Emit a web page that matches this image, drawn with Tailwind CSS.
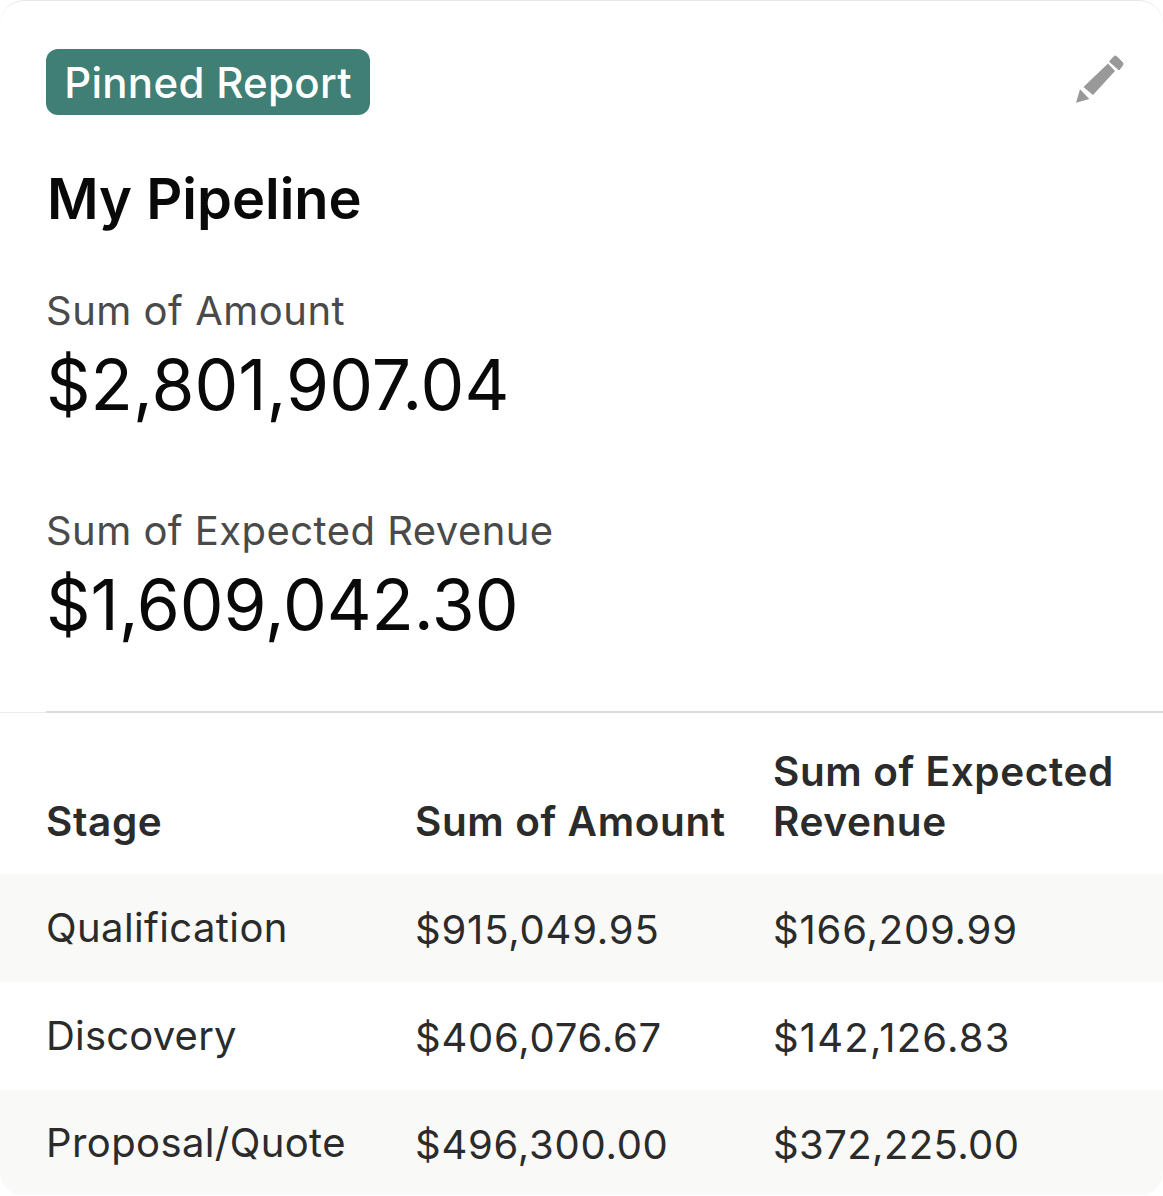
<!DOCTYPE html>
<html lang="en">
<head>
    <meta charset="UTF-8">
    <meta name="viewport" content="width=device-width, initial-scale=1.0">
    <title>My Pipeline</title>
    <script src="https://cdn.jsdelivr.net/npm/@tailwindcss/browser@4"></script>
</head>
<body class="bg-white font-['Inter',sans-serif]">
    <div class="w-[1163px] h-[1196px] overflow-hidden bg-white border-t border-[#e8e8e8] rounded-[24px]">
        <div class="pl-[46px] pr-[38px] pt-[48px]">
            <div class="flex justify-between items-start">
                <span class="h-[66px] w-[324px] flex items-center justify-center rounded-[12px] bg-[#407f75] text-white text-[42px] tracking-[0.3px] font-medium">Pinned Report</span>
                <svg class="mt-[5px]" width="50" height="50" viewBox="0 0 50 50" fill="#999999">
                    <path d="M8.5 33 L33 9.5 L40 17 L18 41 Z"/>
                    <path d="M34.5 7.5 L39 2.5 Q40 1.5 41.5 2.5 L47.5 8.5 Q48.5 10 47.5 11.5 L44 16 Z" stroke="#999999" stroke-linejoin="round"/>
                    <path d="M5 35.3 L14.3 45 L1 48.7 Z"/>
                </svg>
            </div>
            <h1 class="mt-[49px] pl-[1px] text-[56px] leading-[70px] font-semibold text-[#090909]">My Pipeline</h1>
            <div class="mt-[52px]">
                <p class="text-[40px] leading-[50px] tracking-[0.5px] text-[#4a4a4a]">Sum of Amount</p>
                <p class="mt-[13px] text-[69.5px] leading-[72px] text-[#090909]">$2,801,907.04</p>
            </div>
            <div class="mt-[85px]">
                <p class="text-[40px] leading-[50px] tracking-[0.45px] text-[#4a4a4a]">Sum of Expected Revenue</p>
                <p class="mt-[13px] text-[69.5px] leading-[72px] tracking-[-0.1px] text-[#090909]">$1,609,042.30</p>
            </div>
        </div>
        <div class="mt-[70px] flex">
            <div class="w-[46px] mt-[1px] border-t border-[#ebebeb]"></div>
            <div class="flex-1 border-t-2 border-[#dddddd]"></div>
        </div>
        <div class="grid grid-cols-[415px_358px_1fr] items-end h-[161px] pb-[27px] text-[40.5px] leading-[50px] tracking-[0.6px] font-semibold text-[#2b2b2b]">
            <div class="pl-[46px]">Stage</div>
            <div>Sum of Amount</div>
            <div>Sum of Expected<br>Revenue</div>
        </div>
        <div class="text-[40px] leading-[50px] text-[#2b2b2b]">
            <div class="grid grid-cols-[415px_358px_1fr] items-center h-[108px] bg-[#f9f9f7]">
                <div class="pl-[46px] tracking-[0.4px]">Qualification</div>
                <div class="pt-[3px] tracking-[0.8px]">$915,049.95</div>
                <div class="pt-[3px] tracking-[0.8px]">$166,209.99</div>
            </div>
            <div class="grid grid-cols-[415px_358px_1fr] items-center h-[108px] bg-white">
                <div class="pl-[46px] tracking-[0.2px]">Discovery</div>
                <div class="pt-[3px] tracking-[0.75px]">$406,076.67</div>
                <div class="pt-[3px] tracking-[1.2px]">$142,126.83</div>
            </div>
            <div class="grid grid-cols-[415px_358px_1fr] items-center h-[105px] bg-[#f9f9f7] rounded-b-[16px]">
                <div class="pl-[46px] tracking-[0.4px]">Proposal/Quote</div>
                <div class="pt-[5px] tracking-[0.75px]">$496,300.00</div>
                <div class="pt-[5px] tracking-[0.4px]">$372,225.00</div>
            </div>
        </div>
    </div>
</body>
</html>
